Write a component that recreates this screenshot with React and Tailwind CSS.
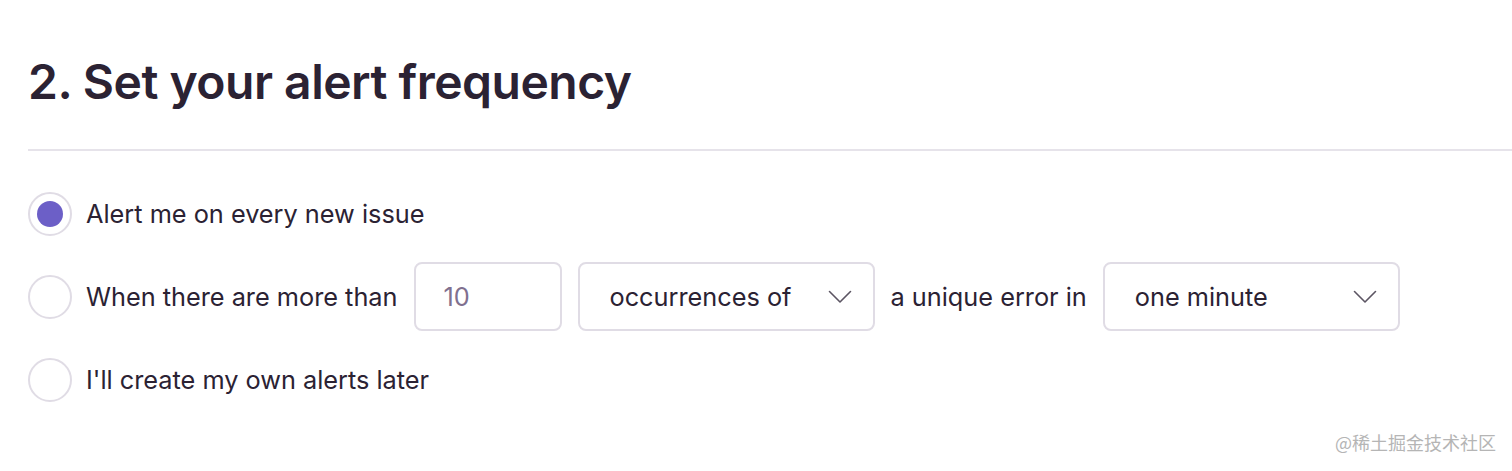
const Radio = ({ checked }) => (
  <span className="w-[44px] h-[44px] rounded-full border-2 border-[#e0dce5] bg-white flex items-center justify-center shrink-0">
    {checked && <span className="w-[26px] h-[26px] rounded-full bg-[#6c5fc7]" />}
  </span>
)

const Chevron = () => (
  <svg width="24" height="14" viewBox="0 0 24 14" fill="none" stroke="#5c5563" strokeWidth="1.6" strokeLinecap="round" strokeLinejoin="round">
    <path d="M1.5 1.5 12 12 22.5 1.5" />
  </svg>
)

const Select = ({ label }) => (
  <div className="w-[297px] h-[69px] rounded-lg border-2 border-[#e0dce5] bg-white flex items-center justify-between pl-[30px] pr-[21px]">
    <span>{label}</span>
    <Chevron />
  </div>
)

export default function App() {
  return (
    <div className="bg-white w-[1512px] h-[471px] relative overflow-hidden font-['Inter',sans-serif] text-[#2b2233]">
      <div className="pl-[28px] pt-[52px]">
        <h2 className="text-[48px] font-semibold leading-[60px] tracking-[-0.5px]">2. Set your alert frequency</h2>
        <div className="h-[2px] bg-[#e6e3ea] mt-[37px]" />
        <div className="flex flex-col text-[25.3px] mt-[41px]">
          <label className="flex items-center gap-[14px] h-[44px]">
            <Radio checked />
            <span>Alert me on every new issue</span>
          </label>
          <label className="flex items-center gap-[14px] h-[69px] mt-[26px]">
            <Radio />
            <span>When there are more than</span>
            <div className="flex items-center gap-[16px] ml-[2px]">
              <div className="w-[148px] h-[69px] rounded-lg border-2 border-[#e0dce5] flex items-center pl-[28px] text-[#80708f]">10</div>
              <Select label="occurrences of" />
              <span>a unique error in</span>
              <Select label="one minute" />
            </div>
          </label>
          <label className="flex items-center gap-[14px] h-[44px] mt-[27px]">
            <Radio />
            <span>I'll create my own alerts later</span>
          </label>
        </div>
      </div>
      <span className="absolute right-[16px] bottom-[15px] text-[18px] text-[#b5b5b5] font-['Noto_Sans_CJK_SC',sans-serif]">@稀土掘金技术社区</span>
    </div>
  )
}
